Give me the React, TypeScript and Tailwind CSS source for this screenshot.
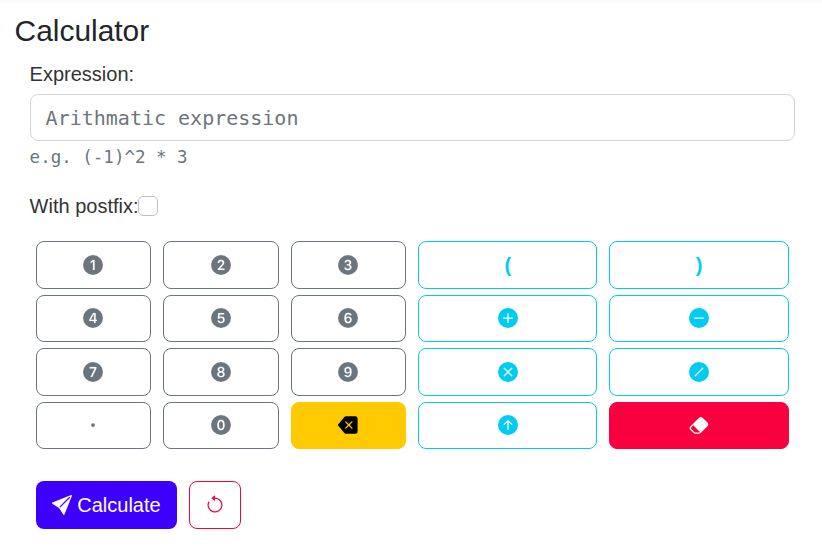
import type { ReactNode } from "react";
import type { IconType } from "react-icons";
import {
  Bs0CircleFill,
  Bs1CircleFill,
  Bs2CircleFill,
  Bs3CircleFill,
  Bs4CircleFill,
  Bs5CircleFill,
  Bs6CircleFill,
  Bs7CircleFill,
  Bs8CircleFill,
  Bs9CircleFill,
  BsArrowCounterclockwise,
  BsArrowUpCircleFill,
  BsBackspaceFill,
  BsDashCircleFill,
  BsDot,
  BsEraserFill,
  BsPlusCircleFill,
  BsSendFill,
  BsSlashCircleFill,
  BsXCircleFill,
} from "react-icons/bs";

type Tone = "digit" | "operator" | "warning" | "danger";

const tones: Record<Tone, string> = {
  digit: "border-[#6a757e] text-[#6a757e]",
  operator: "border-[#00ccf2] text-[#00ccf2]",
  warning: "border-[#ffca00] bg-[#ffca00] text-black",
  danger: "border-[#f9003e] bg-[#f9003e] text-white",
};

interface KeyDef {
  name: string;
  tone: Tone;
  content: ReactNode;
}

// A faint white stroke thickens the cut-out numeral.
function Digit({ icon: Icon }: { icon: IconType }) {
  return <Icon className="overflow-visible stroke-white stroke-[0.1px]" />;
}

const keys: KeyDef[] = [
  { name: "1", tone: "digit", content: <Digit icon={Bs1CircleFill} /> },
  { name: "2", tone: "digit", content: <Digit icon={Bs2CircleFill} /> },
  { name: "3", tone: "digit", content: <Digit icon={Bs3CircleFill} /> },
  { name: "open", tone: "operator", content: <span>(</span> },
  { name: "close", tone: "operator", content: <span>)</span> },
  { name: "4", tone: "digit", content: <Digit icon={Bs4CircleFill} /> },
  { name: "5", tone: "digit", content: <Digit icon={Bs5CircleFill} /> },
  { name: "6", tone: "digit", content: <Digit icon={Bs6CircleFill} /> },
  { name: "plus", tone: "operator", content: <BsPlusCircleFill /> },
  { name: "minus", tone: "operator", content: <BsDashCircleFill /> },
  { name: "7", tone: "digit", content: <Digit icon={Bs7CircleFill} /> },
  { name: "8", tone: "digit", content: <Digit icon={Bs8CircleFill} /> },
  { name: "9", tone: "digit", content: <Digit icon={Bs9CircleFill} /> },
  { name: "times", tone: "operator", content: <BsXCircleFill /> },
  { name: "divide", tone: "operator", content: <BsSlashCircleFill /> },
  { name: "dot", tone: "digit", content: <BsDot /> },
  { name: "0", tone: "digit", content: <Digit icon={Bs0CircleFill} /> },
  { name: "backspace", tone: "warning", content: <BsBackspaceFill /> },
  { name: "power", tone: "operator", content: <BsArrowUpCircleFill /> },
  { name: "clear", tone: "danger", content: <BsEraserFill /> },
];

function Key({ tone, content }: { tone: Tone; content: ReactNode }) {
  return (
    <div className="px-1.5">
      <button
        type="button"
        className={`flex h-[47.5px] w-full items-center justify-center rounded-lg border text-xl font-bold ${tones[tone]}`}
      >
        {content}
      </button>
    </div>
  );
}

export default function App() {
  return (
    <div className="h-[552px] overflow-hidden border-t-[3px] border-[#f8f9fa] bg-white font-['Liberation_Sans',Arial,sans-serif] text-[#212529]">
      <h1 className="px-[14.6px] pt-[10px] text-[29.9px] leading-9">Calculator</h1>
      <form className="pt-[10px] pr-[27.4px] pl-[29.6px] text-[#333333]">
        <label htmlFor="expression" className="block text-xl leading-[30px]">
          Expression:
        </label>
        <input
          id="expression"
          type="text"
          placeholder="Arithmatic expression"
          className="mt-[5px] block h-[47px] w-full rounded-lg border border-[#ced4da] px-[15px] font-['DejaVu_Sans_Mono',monospace] text-xl placeholder:text-[#6c757d]"
        />
        <p className="mt-[3px] font-['DejaVu_Sans_Mono',monospace] text-[17.5px] leading-[26px] text-[#6c757d]">
          e.g. (-1)^2 * 3
        </p>
        <div className="mt-[21px] flex items-center text-xl leading-[30px]">
          <label htmlFor="postfix">With postfix:</label>
          <input
            id="postfix"
            type="checkbox"
            className="-ml-px size-5 appearance-none rounded-[5px] border border-[#bfbfbf] bg-white"
          />
        </div>
        <div className="mt-5 grid grid-cols-[2fr_2fr_2fr_3fr_3fr] gap-y-1.5">
          {keys.map((key) => (
            <Key key={key.name} tone={key.tone} content={key.content} />
          ))}
        </div>
        <div className="mt-8 flex gap-3 px-1.5 text-xl">
          <button
            type="button"
            className="flex h-12 w-[141px] items-center justify-center gap-[5.8px] rounded-lg bg-[#3d00ff] text-white"
          >
            <BsSendFill />
            Calculate
          </button>
          <button
            type="button"
            aria-label="Reset"
            className="flex h-12 w-[52px] items-center justify-center rounded-lg border border-[#f9003e] text-[#f9003e]"
          >
            <BsArrowCounterclockwise />
          </button>
        </div>
      </form>
    </div>
  );
}
